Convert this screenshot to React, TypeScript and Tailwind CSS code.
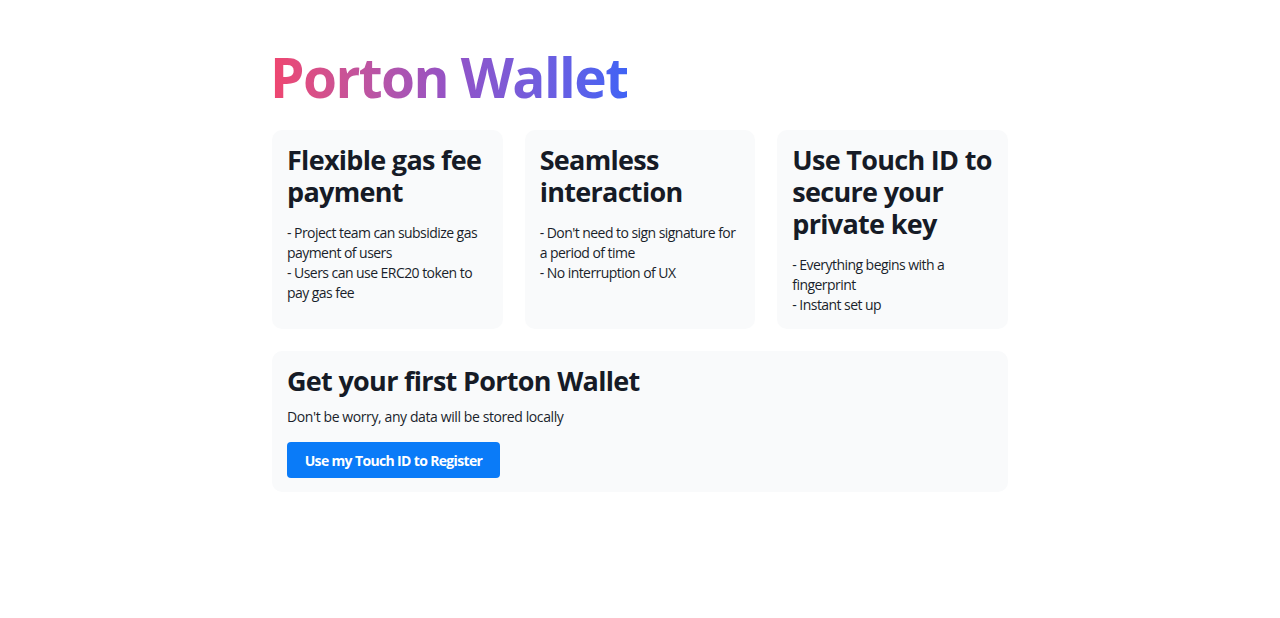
import React from "react";

const cards = [
  {
    title: "Flexible gas fee payment",
    lines: ["- Project team can subsidize gas payment of users", "- Users can use ERC20 token to pay gas fee"],
  },
  {
    title: "Seamless interaction",
    lines: ["- Don't need to sign signature for a period of time", "- No interruption of UX"],
  },
  {
    title: "Use Touch ID to secure your private key",
    lines: ["- Everything begins with a fingerprint", "- Instant set up"],
  },
];

export default function App() {
  return (
    <div
      className="min-h-[618px] bg-white text-[#161b26]"
      style={{ fontFamily: '"Open Sans", "Noto Sans", sans-serif' }}
    >
      <div className="mx-auto w-[736px] pt-[38px]">
        <h1 className="-ml-[2px] inline-block bg-gradient-to-r from-[#f0456e] via-[#9452c6] to-[#3f63f5] bg-clip-text text-[55px] font-bold leading-[78px] tracking-[-1.6px] text-transparent">
          Porton Wallet
        </h1>
        <div className="mt-[14px] grid grid-cols-3 gap-[22px]">
          {cards.map((c) => (
            <div key={c.title} className="rounded-[10px] bg-[#f9fafb] px-[15px] pb-[14px] pt-[14px]">
              <h2 className="text-[27px] font-bold leading-[32px] tracking-[-0.7px]">{c.title}</h2>
              <div className="mt-[15px] text-[14px] leading-[20px] tracking-[-0.55px] text-[#1a1f2b]">
                {c.lines.map((l) => (
                  <p key={l}>{l}</p>
                ))}
              </div>
            </div>
          ))}
        </div>
        <div className="mt-[22px] rounded-[10px] bg-[#f9fafb] px-[15px] pb-[14px] pt-[14px]">
          <h2 className="text-[27px] font-bold leading-[32px] tracking-[-0.7px]">Get your first Porton Wallet</h2>
          <p className="mt-[10px] text-[14px] leading-[20px] tracking-[-0.4px] text-[#1a1f2b]">
            Don't be worry, any data will be stored locally
          </p>
          <button className="mt-[15px] h-[36px] w-[213px] rounded-[4px] bg-[#0a7bf8] text-[14px] font-bold tracking-[-0.65px] text-white">
            Use my Touch ID to Register
          </button>
        </div>
      </div>
    </div>
  );
}
